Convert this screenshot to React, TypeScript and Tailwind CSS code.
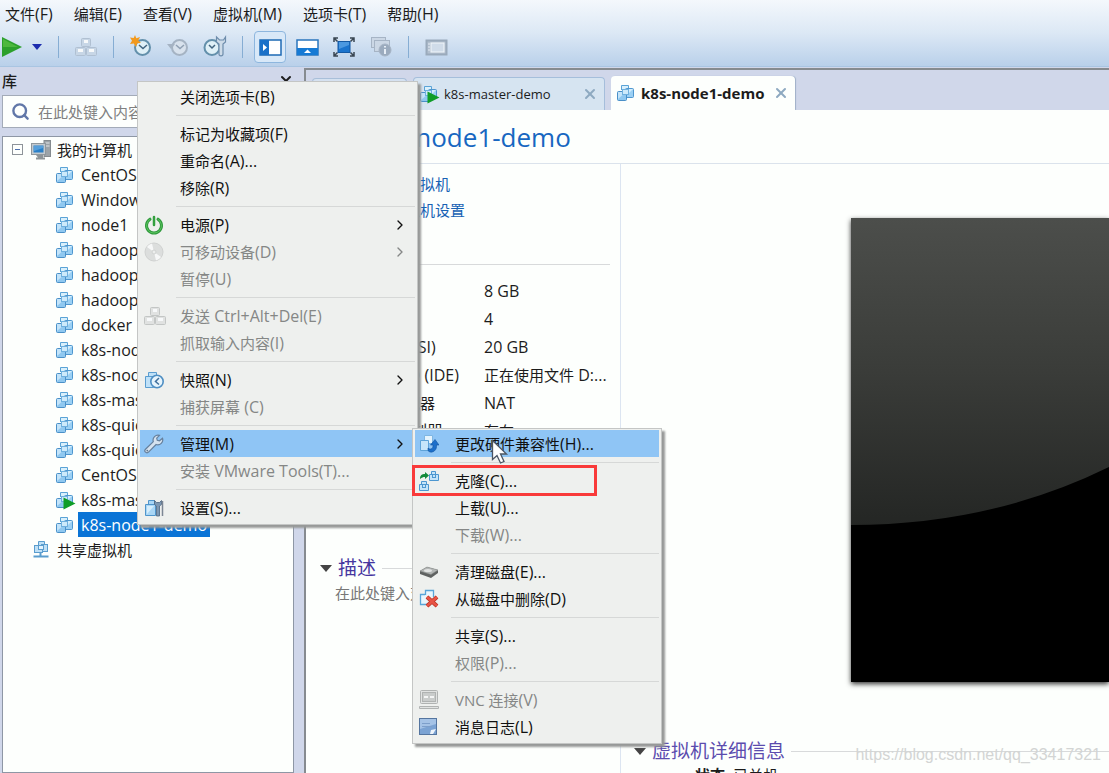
import type { ReactNode } from 'react'
import { ChevronRight, Search, X } from 'lucide-react'

type MenuEntry = {
  label: string
  hint?: string
  icon?: ReactNode
  disabled?: boolean
  arrow?: boolean
  active?: boolean
  marked?: boolean
}

const VmIcon = ({ running = false }: { running?: boolean }) => (
  <svg width="18" height="18" viewBox="0 0 18 18" className="shrink-0 overflow-visible">
    <path d="M4.500 6V1.500h7V5" fill="#d9f0fc" stroke="#5aa3d6" />
    <rect x="8.500" y="4.500" width="8" height="9" rx="1" fill="#9bd0f4" stroke="#4f97cf" />
    <path d="M9 12V5h7z" fill="#d3edfc" />
    <rect x=".500" y="7.500" width="9" height="9" rx="1" fill="#8fc8f0" stroke="#4a90c8" />
    <path d="M1 15V8h8z" fill="#c3e4fa" />
    <rect x="5.500" y="5.500" width="6" height="5" fill="#cdeafb" stroke="#6fb0de" />
    {running && <path d="M7.500 6.500l12 6-12 6z" fill="#0f9d28" />}
  </svg>
)

const PowerIcon = () => (
  <svg width="20" height="20" viewBox="0 0 20 20" fill="none" strokeLinecap="round">
    <path d="M6 4.200a7.500 7.500 0 1 0 8 0" stroke="#2f9a3c" strokeWidth="3" />
    <path d="M6 4.200a7.500 7.500 0 1 0 8 0" stroke="#5cc45f" strokeWidth="1" />
    <path d="M10 2v8" stroke="#33a03f" strokeWidth="2.500" />
  </svg>
)

const DiscIcon = () => (
  <svg width="20" height="20" viewBox="0 0 20 20">
    <circle cx="10" cy="10" r="9" fill="#dcdedd" stroke="#d0d2d1" />
    <path d="M10 10L3 5a9 9 0 0 1 5-3.500zM10 10l7 5a9 9 0 0 1-5 3.500z" fill="#f7f8f8" />
    <circle cx="10" cy="10" r="2" fill="#eceeed" stroke="#d0d2d1" />
  </svg>
)

const KeysIcon = ({ fill = '#e0e2e1', stroke = '#c3c6c5' }: { fill?: string; stroke?: string }) => (
  <svg width="22" height="20" viewBox="0 0 22 20" fill={fill} stroke={stroke}>
    <rect x="6.500" y="1.500" width="9" height="8" rx="1" />
    <rect x="0.500" y="10.500" width="10" height="8" rx="1" />
    <rect x="11.500" y="10.500" width="10" height="8" rx="1" />
    <path d="M9 4.500h4M3 13.500h5M14 13.500h5" stroke="#f7f9fa" strokeWidth="3" />
  </svg>
)

const SnapshotIcon = () => (
  <svg width="20" height="18" viewBox="0 0 20 18">
    <path d="M4.500 5V1.500h8V5M1.500 5.500h8v11h-8z" fill="#bfe1f8" stroke="#5a9dd0" />
    <circle cx="13" cy="10.500" r="6.200" fill="#e6f4fc" stroke="#4f8fc3" strokeWidth="1.600" />
    <path d="M15 7l-3.500 3.500L15 13.500" fill="none" stroke="#3f6f9c" strokeWidth="1.500" />
  </svg>
)

const WrenchIcon = () => (
  <svg width="20" height="20" viewBox="0 0 20 20">
    <path
      d="M18.500 4.200l-3 2.600-2.200-.5-.6-2.200 2.800-2.800a5 5 0 0 0-6.200 6.300L1.500 15.200a2.100 2.100 0 0 0 3 3l7.600-7.700a5 5 0 0 0 6.400-6.300z"
      fill="#d5e2ef" stroke="#66809d" strokeWidth="1.200"
    />
    <circle cx="3.300" cy="16.600" r=".9" fill="#5f7690" />
  </svg>
)

const SettingsIcon = () => (
  <svg width="20" height="18" viewBox="0 0 20 18">
    <path d="M4.500 5V1.500h6V5M1.500 5.500h10v11h-10z" fill="#a9d6f5" stroke="#4f95cb" />
    <path d="M3 15V7h7z" fill="#d5edfb" />
    <path d="M10.500 1.500v4l2 1.500v10h3V7l2-1.500v-4l-2 2h-3z" fill="#7d97b2" stroke="#4b647f" strokeWidth=".8" />
    <path d="M18.500 2v15" stroke="#7c8794" strokeWidth="1.500" />
  </svg>
)

const UpgradeIcon = () => (
  <svg width="20" height="19" viewBox="0 0 20 19">
    <path d="M5.500 1.500h8v8h-8z" fill="#e3f3fd" stroke="#7eb6e2" />
    <path d="M1.500 6.500h8v10h-8z" fill="#c7e5fa" stroke="#5fa3d8" />
    <path d="M9 14c2 2 5 1 5-2v-1h-2.500L16 5.500l4 5.500h-2.500v1.500c0 5-6 7.500-8.500 4z" fill="#1d6fca" stroke="#12539e" strokeWidth=".6" />
  </svg>
)

const CloneIcon = () => (
  <svg width="20" height="20" viewBox="0 0 20 20">
    <path d="M1 8c0-4 2-5 5-5V1l4 3.500L6 8V6C4 6 3 6.500 1 8z" fill="#138a3a" />
    <g fill="#c4e4f9" stroke="#4c97d0">
      <path d="M12.500 3V.5h4V3M10.500 3.500h9v6h-9z" />
      <rect x="13.500" y="3.500" width="3" height="3" />
      <path d="M2.500 13v-2.500h5V13M.500 13.500h9v6h-9z" />
      <rect x="3.500" y="13.500" width="3" height="3" />
    </g>
  </svg>
)

const DiskIcon = () => (
  <svg width="20" height="14" viewBox="0 0 20 14">
    <path d="M1 6l7-4 11 3v3l-7 5L1 9z" fill="#5f6261" />
    <path d="M1 6l7-4 11 3-7 4.500z" fill="#b3b6b5" stroke="#8b8e8d" strokeWidth=".5" />
    <ellipse cx="9" cy="5.500" rx="4" ry="1.600" fill="#e2e4e3" />
  </svg>
)

const DeleteIcon = () => (
  <svg width="20" height="19" viewBox="0 0 20 19">
    <path d="M6.500 6V1.500h8V8M6 5.500H1.500v10H9" fill="#e9f6fd" stroke="#58a5d8" strokeWidth="1.300" />
    <path d="M8 8l10 9M18 8L8 17" stroke="#b92f22" strokeWidth="4" />
    <path d="M8 8l10 9M18 8L8 17" stroke="#e85445" strokeWidth="2.500" />
  </svg>
)

const VncIcon = () => (
  <svg width="20" height="20" viewBox="0 0 20 20" fill="#e1e3e2" stroke="#b0b3b2">
    <rect x="1.500" y="0.500" width="17" height="13" rx="1" />
    <rect x="3.500" y="2.500" width="13" height="9" fill="#c9cccb" />
    <path d="M5 7h4M11 7h4" stroke="#f4f5f5" strokeWidth="2" />
    <path d="M.500 16.500h19v2H.500z" />
  </svg>
)

const LogIcon = () => (
  <svg width="18" height="17" viewBox="0 0 18 17">
    <rect x=".5" y=".5" width="17" height="16" fill="#7ba3d3" stroke="#54759f" />
    <path d="M1 1h16v5L1 11z" fill="#a5c3e6" />
    <path d="M3 5.500h8M3 8.500h10" stroke="#7d9fca" />
    <path d="M17 11l-5 1-1 4h3z" fill="#edf4fb" />
  </svg>
)

const ClockIcon = ({ kind }: { kind: 'new' | 'back' | 'manage' }) => {
  const grey = kind === 'back'
  return (
    <svg width="24" height="24" viewBox="0 0 24 24" fill="none">
      <circle cx={kind === 'manage' ? 9 : 13.500} cy="12.500" r="7.500" fill={grey ? '#d8e2ed' : '#dff0f7'} stroke={grey ? '#a5b3c3' : '#6390ab'} strokeWidth="2" />
      <path d={kind === 'manage' ? 'M6 10l3 3 3-3' : 'M10 10l4 3.500 4-3.500'} stroke={grey ? '#8fa0b3' : '#41647f'} strokeWidth="1.500" />
      {kind === 'new' && <path d="M6 0l1.300 3.300L11 2 9.300 5.500 12 8 8.300 8.300 7 12 4.800 8.500 1 9l2-3.200L1 2.500l3.700.6z" fill="#f39a1d" />}
      {kind === 'back' && <path d="M1 9h8l-4 5z" fill="#a5b3c3" />}
      {kind === 'manage' && (
        <path d="M13.500 2v5l2.500 2v10c0 2.500 4 2.500 4 0V9l2.500-2V2l-2 3h-4z" fill="#cddbe8" stroke="#6d8cab" strokeWidth="1.200" />
      )}
    </svg>
  )
}

const SidebarIcon = () => (
  <svg width="23" height="17" viewBox="0 0 23 17">
    <rect x="1" y="1" width="21" height="15" fill="#fff" stroke="#1c69b4" strokeWidth="1.500" />
    <path d="M1 1h9v15H1z" fill="#1b71c8" />
    <path d="M4 5l4 3.500L4 12z" fill="#fff" />
  </svg>
)

const ThumbnailIcon = () => (
  <svg width="23" height="17" viewBox="0 0 23 17">
    <rect x="1" y="1" width="21" height="15" fill="#fff" stroke="#2a76bd" strokeWidth="1.500" />
    <path d="M1 9h21v7H1z" fill="#167ad4" />
    <path d="M8 14l3.500-3.500L15 14z" fill="#fff" />
  </svg>
)

const FullscreenIcon = () => (
  <svg width="22" height="20" viewBox="0 0 22 20" fill="none">
    <path d="M1 5V1h4M1.500 1.500l3 3M17 1h4v4M20.500 1.500l-3 3M1 15v4h4M1.500 18.500l3-3M17 19h4v-4M20.500 18.500l-3-3" stroke="#3a4652" strokeWidth="1.500" />
    <rect x="5" y="4.500" width="12" height="11" fill="#1b74cd" stroke="#1459a3" />
    <path d="M6 5h10v3L6 12z" fill="#4b98e0" />
  </svg>
)

const UnityIcon = () => (
  <svg width="21" height="20" viewBox="0 0 21 20" fill="#cbd7e5" stroke="#a6b4c5">
    <rect x=".5" y=".5" width="14" height="10" />
    <rect x="3.500" y="3.500" width="15" height="11" />
    <circle cx="14" cy="13" r="6" fill="#9babbe" />
    <path d="M14 9v1.500M14 12v5" stroke="#e7eef6" strokeWidth="2" />
  </svg>
)

const FrameIcon = () => (
  <svg width="23" height="17" viewBox="0 0 23 17">
    <rect x="1.500" y="1.500" width="20" height="14" fill="#b3c0cf" stroke="#9aaabb" strokeWidth="2" />
    <rect x="6" y="4" width="13" height="9" fill="#d0dce9" stroke="#f1f6fa" />
    <path d="M4 4v9" stroke="#e6edf4" strokeDasharray="2 1" />
  </svg>
)

const ComputerIcon = () => (
  <svg width="20" height="20" viewBox="0 0 20 20">
    <rect x="13" y=".5" width="6.500" height="16" fill="#9ca3a8" stroke="#858b8f" />
    <path d="M14.500 3h4M14.500 6h4" stroke="#e2e5e7" />
    <rect x=".5" y="3.500" width="14" height="11" fill="#c3cacf" stroke="#8f979c" />
    <rect x="2.500" y="5.500" width="10" height="7" fill="#2a80c8" />
    <path d="M3 6h9v2L3 11z" fill="#559fdb" />
    <path d="M5 15h7v2.500h2v2H5v-2h2z" fill="#8d9498" />
  </svg>
)

const SharedIcon = () => (
  <svg width="16" height="19" viewBox="0 0 16 19" fill="#bfe0f6" stroke="#5a9dce">
    <path d="M5.500 5V1.500h6V5" />
    <rect x="8.500" y="4.500" width="6" height="7" />
    <rect x="1.500" y="5.500" width="8" height="7" />
    <rect x="5.500" y="5.500" width="5" height="4" fill="#e3f3fd" />
    <path d="M7.500 13v4M.500 16.500h15" strokeWidth="2" />
  </svg>
)

const menuBar = [
  ['文件', '(F)'], ['编辑', '(E)'], ['查看', '(V)'], ['虚拟机', '(M)'], ['选项卡', '(T)'], ['帮助', '(H)'],
]

const machines = [
  'CentOS7', 'Windows', 'node1', 'hadoop', 'hadoop', 'hadoop', 'docker', 'k8s-node', 'k8s-node',
  'k8s-mas', 'k8s-quick', 'k8s-quick', 'CentOS7', 'k8s-mast', 'k8s-node1-demo',
]

const devices = [
  ['内存', '', '', '8 GB'],
  ['处理器', '', '', '4'],
  ['硬盘', ' (SCSI)', '', '20 GB'],
  ['', 'CD/DVD (IDE)', '正在使用文件', ' D:...'],
  ['网络适配器', '', '', 'NAT'],
  ['', 'USB 控制器', '存在', ''],
]

const contextMenu: MenuEntry[][] = [
  [{ label: '关闭选项卡', hint: '(B)' }],
  [{ label: '标记为收藏项', hint: '(F)' }, { label: '重命名', hint: '(A)...' }, { label: '移除', hint: '(R)' }],
  [
    { label: '电源', hint: '(P)', icon: <PowerIcon />, arrow: true },
    { label: '可移动设备', hint: '(D)', icon: <DiscIcon />, arrow: true, disabled: true },
    { label: '暂停', hint: '(U)', disabled: true },
  ],
  [
    { label: '发送', hint: ' Ctrl+Alt+Del(E)', icon: <KeysIcon />, disabled: true },
    { label: '抓取输入内容', hint: '(I)', disabled: true },
  ],
  [
    { label: '快照', hint: '(N)', icon: <SnapshotIcon />, arrow: true },
    { label: '捕获屏幕', hint: ' (C)', disabled: true },
  ],
  [
    { label: '管理', hint: '(M)', icon: <WrenchIcon />, arrow: true, active: true },
    { label: '安装', hint: ' VMware Tools(T)...', disabled: true },
  ],
  [{ label: '设置', hint: '(S)...', icon: <SettingsIcon /> }],
]

const manageMenu: MenuEntry[][] = [
  [{ label: '更改硬件兼容性', hint: '(H)...', icon: <UpgradeIcon />, active: true }],
  [
    { label: '克隆', hint: '(C)...', icon: <CloneIcon />, marked: true },
    { label: '上载', hint: '(U)...' },
    { label: '下载', hint: '(W)...', disabled: true },
  ],
  [
    { label: '清理磁盘', hint: '(E)...', icon: <DiskIcon /> },
    { label: '从磁盘中删除', hint: '(D)', icon: <DeleteIcon /> },
  ],
  [{ label: '共享', hint: '(S)...' }, { label: '权限', hint: '(P)...', disabled: true }],
  [
    { label: 'VNC 连接', hint: '(V)', icon: <VncIcon />, disabled: true },
    { label: '消息日志', hint: '(L)', icon: <LogIcon /> },
  ],
]

function Menu({ groups, name, className }: { groups: MenuEntry[][]; name: string; className: string }) {
  return (
    <div role="menu" aria-label={name} className={`absolute border border-[#c4c6c5] bg-[#eef0ee] px-0.5 pt-px pb-[3px] shadow-[3px_3px_2px_#979998] ${className}`}>
      {groups.map((group, i) => (
        <div key={i}>
          {i > 0 && <div className="ml-9 h-[10px] pt-[5px]"><div className="h-px bg-[#d6d8d7]" /></div>}
          {group.map(item => (
            <button
              key={item.label}
              role="menuitem"
              disabled={item.disabled}
              className={`relative flex h-[27px] w-full items-center text-left ${item.active ? 'bg-[#8fc5f5]' : ''} ${item.disabled ? 'text-[#858786]' : 'text-[#111]'}`}
            >
              <span className="flex w-10 shrink-0 items-center pl-1">{item.icon}</span>
              <span className="whitespace-pre">{item.label}<span className="text-base leading-5">{item.hint}</span></span>
              {item.arrow && <ChevronRight size={16} className="ml-auto mr-[7px]" />}
              {item.marked && <span className="absolute -left-[3px] -top-0.5 h-[31px] w-[185px] border-3 border-[#f93a3a]" />}
            </button>
          ))}
        </div>
      ))}
    </div>
  )
}

const ToolButton = ({ label, children, active = false }: { label: string; children: ReactNode; active?: boolean }) => (
  <button
    aria-label={label}
    className={`flex h-8 w-8 shrink-0 items-center justify-center ${active ? 'rounded-sm border border-[#8db6de] bg-[#d8e8f8]' : ''}`}
  >
    {children}
  </button>
)

const ToolDivider = () => <div className="flex h-[22px] w-[13px] shrink-0 justify-center"><div className="w-px bg-[#86add3]" /></div>

export default function App() {
  return (
    <div className="relative flex h-screen flex-col overflow-hidden bg-[#d0d7ea] font-['Open_Sans','Noto_Sans_CJK_SC',sans-serif] text-[15px] leading-5 text-[#1c1c1c]">
      <header className="h-[67px] shrink-0 border-b border-[#a9c5e2] bg-linear-to-b from-[#f4f8fc] via-[#dce8f5] to-[#b9d0ea]">
        <nav className="flex h-7 items-center gap-[21px] pl-[5px]">
          {menuBar.map(([label, key]) => (
            <button key={label} className="whitespace-nowrap">{label}<span className="text-base leading-5">{key}</span></button>
          ))}
        </nav>
        <div className="flex h-[38px] items-center gap-[5px]">
          <button aria-label="开机" className="w-[22px]">
            <svg width="22" height="22" viewBox="0 0 22 22"><path d="M2 1l20 10L2 21z" fill="#2ca02c" /><path d="M3 3l15 8H3z" fill="#4db83e" /></svg>
          </button>
          <button aria-label="电源选项" className="flex w-5 justify-center">
            <svg width="10" height="7" viewBox="0 0 10 7"><path d="M0 0h10L5 6z" fill="#1c2cae" /></svg>
          </button>
          <ToolDivider />
          <ToolButton label="发送 Ctrl+Alt+Del"><KeysIcon fill="#c7d6e6" stroke="#b0c0d2" /></ToolButton>
          <ToolDivider />
          <ToolButton label="拍摄快照"><ClockIcon kind="new" /></ToolButton>
          <ToolButton label="恢复快照"><ClockIcon kind="back" /></ToolButton>
          <ToolButton label="管理快照"><ClockIcon kind="manage" /></ToolButton>
          <ToolDivider />
          <ToolButton label="显示库" active><SidebarIcon /></ToolButton>
          <ToolButton label="缩略图栏"><ThumbnailIcon /></ToolButton>
          <ToolButton label="全屏"><FullscreenIcon /></ToolButton>
          <ToolButton label="Unity"><UnityIcon /></ToolButton>
          <ToolDivider />
          <ToolButton label="控制台视图"><FrameIcon /></ToolButton>
        </div>
      </header>

      <div className="flex min-h-0 flex-1">
        <aside className="mr-[10px] flex w-[294px] shrink-0 flex-col pl-0.5">
          <div className="flex h-7 items-center justify-between">
            <h2 className="font-medium">库</h2>
            <button aria-label="关闭库"><X size={16} strokeWidth={3} /></button>
          </div>
          <label className="mb-2 flex h-[33px] shrink-0 items-center gap-2 border border-[#a3abb8] bg-[#fdfffd] pl-2">
            <Search size={19} className="text-[#6177a8]" strokeWidth={3} />
            <input aria-label="搜索库" placeholder="在此处键入内容进行搜索" className="min-w-0 flex-1 bg-transparent outline-none placeholder:text-[#808080]" />
          </label>
          <div className="flex-1 overflow-hidden border border-[#8e97a5] bg-[#fdfffd]">
            <button className="flex h-[25px] items-center pl-[9px]">
              <span className="flex h-[11px] w-[11px] items-center justify-center border border-[#8d9399]"><span className="h-px w-[5px] bg-[#4d6fae]" /></span>
              <span className="ml-2 mr-1.5"><ComputerIcon /></span>
              我的计算机
            </button>
            {machines.map((name, i) => (
              <button key={i} className="flex h-[25px] w-full items-center gap-1 pl-[53px] text-base leading-5">
                <VmIcon running={i === 13} />
                <span className={`flex h-full items-center whitespace-nowrap px-[3px] ${i === 14 ? 'bg-[#0a74d6] text-white' : ''}`}>{name}</span>
              </button>
            ))}
            <button className="flex h-[25px] items-center gap-2 pl-[30px]"><SharedIcon />共享虚拟机</button>
          </div>
        </aside>

        <main className="mt-px flex min-w-0 flex-1 flex-col border-l-2 border-t-2 border-[#868b90]">
          <div role="tablist" className="flex h-10 shrink-0 items-end gap-1.5 pl-1.5">
            <button role="tab" className="h-8 w-[95px] rounded-t border border-b-0 border-[#a9bfd9] bg-[#d5e1f0]" aria-label="主页" />
            <div className="flex h-[33px] w-[192px] items-center rounded-t border border-b-0 border-[#a5bedb] bg-[#d6e4f1] pl-1.5 pr-1.5">
              <button role="tab" className="flex flex-1 items-center gap-1.5 text-[13px]"><VmIcon running /><span>k8s-master-demo</span></button>
              <button aria-label="关闭 k8s-master-demo"><X size={16} strokeWidth={3} className="text-[#8ea9c1]" /></button>
            </div>
            <div className="flex h-[34px] w-[184px] items-center rounded-t bg-[#fdfffd] pl-1.5 pr-1.5 shadow-[1px_0_1px_#9fb0c8]">
              <button role="tab" aria-selected="true" className="flex flex-1 items-center gap-1.5 font-bold"><VmIcon /><span>k8s-node1-demo</span></button>
              <button aria-label="关闭 k8s-node1-demo"><X size={16} strokeWidth={3} className="text-[#8ea9c1]" /></button>
            </div>
          </div>

          <h1 className="flex h-[54px] shrink-0 items-center border-b border-[#dbe3ec] bg-[#fdfffd] pl-[60px] text-[26px] leading-8 text-[#1767c1]">k8s-node1-demo</h1>

          <div className="flex min-h-0 flex-1 bg-[#fdfffd]">
            <section className="w-[315px] shrink-0 border-r border-[#dce5f1] pl-[14px] pr-[10px]">
              <div className="flex flex-col items-start gap-1.5 pl-10 pt-[10px] text-[#1762b4]">
                <a href="#power">开启此虚拟机</a>
                <a href="#settings">编辑虚拟机设置</a>
              </div>
              <div className="mt-11 mb-3 h-px bg-[#d8dadb]" />
              <table className="w-full table-fixed">
                <tbody>
                  {devices.map(([cjk, latin, cjkValue, value]) => (
                    <tr key={cjk + latin} className="h-[28px]">
                      <td className="w-[164px] whitespace-pre pl-10">{cjk}<span className="text-base leading-5">{latin}</span></td>
                      <td className="whitespace-pre">{cjkValue}<span className="text-base leading-5">{value}</span></td>
                    </tr>
                  ))}
                </tbody>
              </table>
              <div className="mt-[109px] flex items-center gap-1.5">
                <svg width="12" height="7" viewBox="0 0 12 7"><path d="M0 0h12L6 7z" fill="#444" /></svg>
                <h2 className="text-[19px] leading-7 text-[#4636a0]">描述</h2>
                <div className="h-px flex-1 bg-[#d8dadb]" />
              </div>
              <p className="pl-[15px] pt-px text-[#777]">在此处键入对该虚拟机的描述。</p>
            </section>

            <section className="min-w-0 flex-1 overflow-hidden pl-[13px] pt-[54px]">
              <div className="ml-[217px] h-[464px] overflow-hidden bg-black shadow-[0_2px_5px_#333]">
                <svg width="100%" height="100%" viewBox="0 0 258 464" preserveAspectRatio="none">
                  <defs>
                    <linearGradient id="glass" x1="0" y1="0" x2="0" y2="1">
                      <stop offset="0" stopColor="#4c4e4b" />
                      <stop offset="0.5" stopColor="#3a3c39" />
                      <stop offset="1" stopColor="#242624" />
                    </linearGradient>
                  </defs>
                  <path d="M0 0H258V249Q140 307 0 307Z" fill="url(#glass)" />
                </svg>
              </div>
              <div className="mt-[55px] flex items-center gap-1.5">
                <svg width="12" height="7" viewBox="0 0 12 7"><path d="M0 0h12L6 7z" fill="#444" /></svg>
                <h2 className="whitespace-nowrap text-[19px] leading-7 text-[#5b4cae]">虚拟机详细信息</h2>
                <div className="h-px flex-1 bg-[#d8dadb]" />
              </div>
              <p className="whitespace-pre pl-[61px]"><b>状态:</b> 已关机</p>
            </section>
          </div>
        </main>
      </div>

      <Menu groups={contextMenu} name="虚拟机" className="left-[137px] top-[81px] w-[281px]" />
      <Menu groups={manageMenu} name="管理" className="left-[412px] top-[428px] w-[250px]" />

      <svg width="18" height="26" viewBox="0 0 18 26" className="absolute left-[491px] top-[439px]">
        <path d="M1.500 1.500v19l4.500-4 3.500 7.500 3.500-1.500-3.500-7.500h6z" fill="#fff" stroke="#4b5563" strokeWidth="1.300" />
      </svg>
      <p className="absolute bottom-2 right-2 font-['Liberation_Sans',sans-serif] text-base leading-5 text-[#d3d5d4]">https://blog.csdn.net/qq_33417321</p>
    </div>
  )
}
